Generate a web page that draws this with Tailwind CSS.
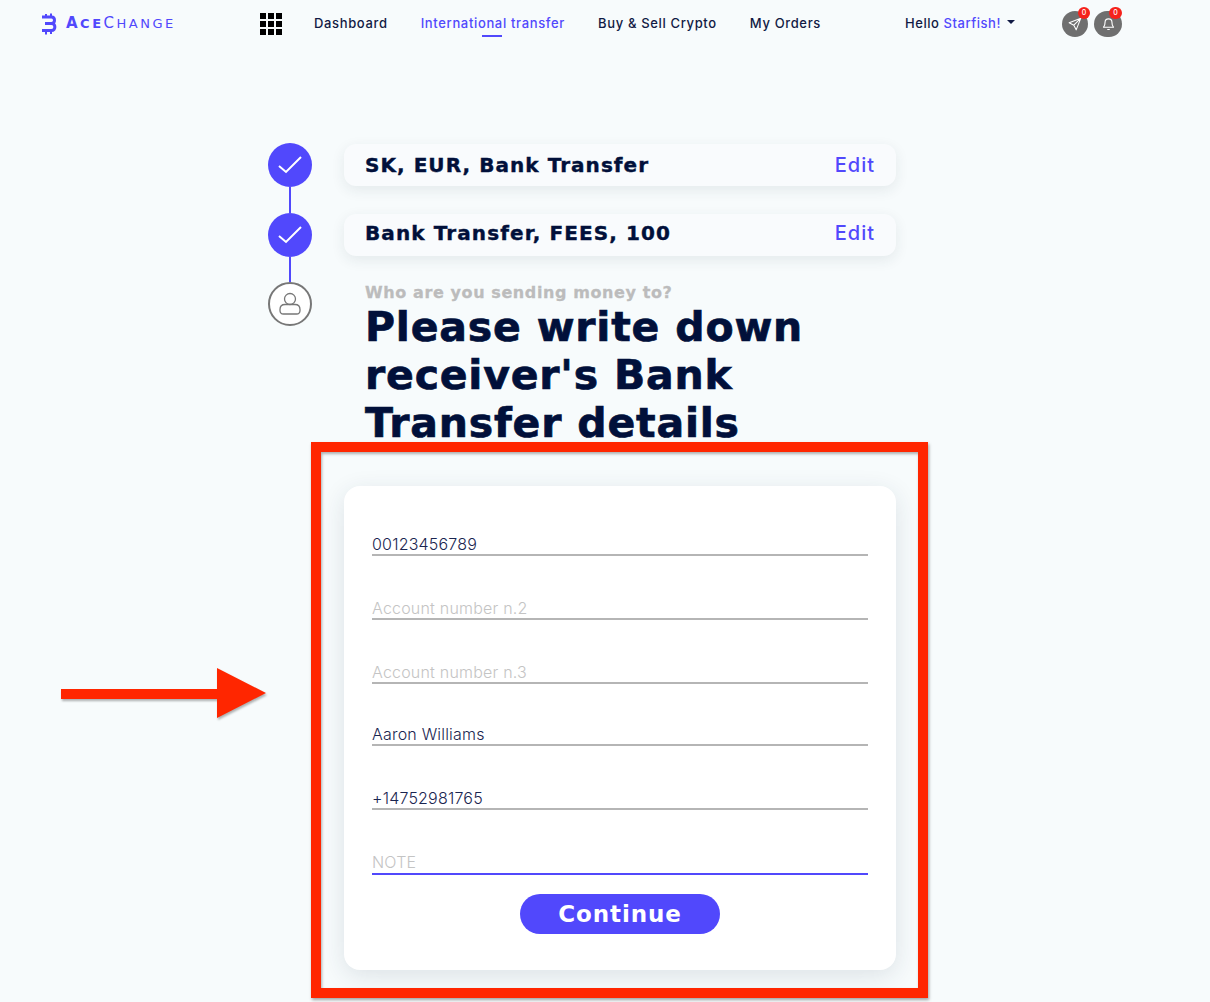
<!DOCTYPE html>
<html lang="en">
<head>
    <meta charset="UTF-8">
    <meta name="viewport" content="width=device-width, initial-scale=1.0">
    <title>AceChange - International transfer</title>
    <script src="https://cdn.jsdelivr.net/npm/@tailwindcss/browser@4"></script>
</head>
<body class="relative h-[1002px] overflow-hidden bg-[#f7fbfc] font-['Inter',sans-serif]">

    <!-- Top nav -->
    <header class="flex h-[47px] items-center text-[13px] font-medium tracking-[0.65px] text-[#111a44]">
        <div class="ml-[41px] flex w-[219px] items-center">
            <svg class="h-[22px] w-[16px]" viewBox="0 0 16 22" fill="none" stroke="#5148fc" stroke-width="3">
                <path d="M1 4H10.500C14.500 4 14.500 10.500 10.500 10.500H4M10.500 10.500C15 10.500 15 17.500 10.500 17.500H1"/>
                <path d="M5 1V4M10 .5V4M5 17.500V21.500M10 17.500V21" stroke-width="2"/>
            </svg>
            <span class="ml-[9px] whitespace-nowrap font-['DejaVu_Sans',sans-serif] text-[13px] tracking-[2.500px] text-[#5148fc]"><b><span class="text-[15px]">A</span>CE</b><span class="font-normal"><span class="text-[15px]">C</span>HANGE</span></span>
        </div>
        <div class="grid h-[22px] w-[22px] grid-cols-3 gap-[2px]">
            <i class="bg-black"></i><i class="bg-black"></i><i class="bg-black"></i>
            <i class="bg-black"></i><i class="bg-black"></i><i class="bg-black"></i>
            <i class="bg-black"></i><i class="bg-black"></i><i class="bg-black"></i>
        </div>
        <nav class="ml-[32px] flex w-[591px] gap-[33px]">
            <a>Dashboard</a>
            <a class="relative text-[#5148fc]">International transfer
                <span class="absolute bottom-[-4px] left-[61px] h-[2px] w-[20px] bg-[#5148fc]"></span>
            </a>
            <a>Buy &amp; Sell Crypto</a>
            <a>My Orders</a>
        </nav>
        <div class="flex w-[157px] items-center tracking-[0.55px]">
            Hello&nbsp;<span class="text-[#5148fc]">Starfish!</span>
            <span class="ml-[6px] mb-[3px] h-0 w-0 border-x-[4px] border-t-[4px] border-x-transparent border-t-[#111a44]"></span>
        </div>
        <div class="flex gap-[6px]">
            <div class="relative flex h-[26px] w-[26px] items-center justify-center rounded-full bg-[#6f6f6f]">
                <svg class="h-[14px] w-[14px]" viewBox="0 0 24 24" fill="none" stroke="#fff" stroke-width="1.800" stroke-linejoin="round">
                    <path d="M22 2L2 10l8 4 4 8zM22 2L10 14"/>
                </svg>
                <span class="absolute right-[-2px] top-[-4px] flex h-[12px] w-[12px] items-center justify-center rounded-full bg-[#f5221b] text-[7px] leading-none tracking-normal text-white">0</span>
            </div>
            <div class="relative flex h-[26px] w-[28px] items-center justify-center rounded-full bg-[#6f6f6f]">
                <svg class="h-[15px] w-[15px]" viewBox="0 0 24 24" fill="none" stroke="#fff" stroke-width="1.800" stroke-linejoin="round">
                    <path d="M4 18c2-2 2.500-4 2.500-8a5.500 5.500 0 0111 0c0 4 .5 6 2.500 8zM10 21.500h4"/>
                </svg>
                <span class="absolute right-[0px] top-[-4px] flex h-[12px] w-[13px] items-center justify-center rounded-full bg-[#f5221b] text-[7px] leading-none tracking-normal text-white">0</span>
            </div>
        </div>
    </header>

    <!-- Steps -->
    <main class="ml-[268px] mt-[96px] w-[628px] text-[#01103a]">
        <div class="flex gap-[32px]">
            <div class="flex w-[44px] flex-col items-center">
                <div class="flex h-[44px] w-[44px] items-center justify-center rounded-full bg-[#5148fc]">
                    <svg class="h-[26px] w-[26px]" viewBox="0 0 26 26" fill="none" stroke="#fff" stroke-width="2"><path d="M2 14l7 6L24 5"/></svg>
                </div>
                <div class="h-[26px] w-[2px] bg-[#5148fc]"></div>
            </div>
            <div class="mt-[1px] flex h-[42px] w-[552px] items-center justify-between rounded-[12px] bg-[#f9fbfd] px-[21px] shadow-[0_4px_14px_rgba(30,50,70,0.09)]">
                <span class="font-['DejaVu_Sans',sans-serif] text-[20px] font-bold tracking-[1.05px] [-webkit-text-stroke:0.4px_#01103a]">SK, EUR, Bank Transfer</span>
                <span class="text-[20px] font-medium tracking-[1px] text-[#5148fc]">Edit</span>
            </div>
        </div>
        <div class="flex gap-[32px]">
            <div class="flex w-[44px] flex-col items-center">
                <div class="flex h-[44px] w-[44px] items-center justify-center rounded-full bg-[#5148fc]">
                    <svg class="h-[26px] w-[26px]" viewBox="0 0 26 26" fill="none" stroke="#fff" stroke-width="2"><path d="M2 14l7 6L24 5"/></svg>
                </div>
                <div class="h-[25px] w-[2px] bg-[#5148fc]"></div>
            </div>
            <div class="mt-[1px] flex h-[42px] w-[552px] items-center justify-between rounded-[12px] bg-[#f9fbfd] px-[21px] pb-[4px] shadow-[0_4px_14px_rgba(30,50,70,0.09)]">
                <span class="font-['DejaVu_Sans',sans-serif] text-[20px] font-bold tracking-[1.1px] [-webkit-text-stroke:0.4px_#01103a]">Bank Transfer, FEES, 100</span>
                <span class="text-[20px] font-medium tracking-[1px] text-[#5148fc]">Edit</span>
            </div>
        </div>
        <div class="flex gap-[32px]">
            <div class="flex h-[44px] w-[44px] shrink-0 items-center justify-center rounded-full border-2 border-[#777] bg-white">
                <svg class="h-[26px] w-[26px]" viewBox="0 0 26 26" fill="none" stroke="#777" stroke-width="1.300">
                    <circle cx="13" cy="8" r="5.500"/>
                    <path d="M8 13.500h10c3 0 5 2 5 5v1c0 2-1.500 3.500-3.500 3.500h-13C4.500 23 3 21.500 3 19.500v-1c0-3 2-5 5-5z"/>
                </svg>
            </div>
            <div class="ml-[21px] w-[450px]">
                <p class="mt-[1px] font-['DejaVu_Sans',sans-serif] text-[16px] font-bold leading-[20px] tracking-[0.6px] text-[#bcbcbc] [-webkit-text-stroke:0.3px_#bcbcbc]">Who are you sending money to?</p>
                <h1 class="font-['DejaVu_Sans',sans-serif] text-[41px] font-bold leading-[48px] tracking-[0.8px] [-webkit-text-stroke:0.7px_#01103a]">Please write down receiver's Bank Transfer details</h1>
            </div>
        </div>

        <!-- Receiver form -->
        <form class="ml-[76px] mt-[39px] flex h-[484px] w-[552px] flex-col rounded-[16px] bg-white px-[28px] pt-[45px] shadow-[0_6px_24px_rgba(30,50,70,0.12)] text-[16px] font-light tracking-[0.2px]">
            <div class="h-[25px] border-b-2 border-[#b5b5b5] leading-[26px] text-[#1a2550]">00123456789</div>
            <div class="mt-[39px] h-[25px] border-b-2 border-[#b5b5b5] leading-[26px] text-[#c4c4c4]">Account number n.2</div>
            <div class="mt-[39px] h-[25px] border-b-2 border-[#b5b5b5] leading-[26px] text-[#c4c4c4]">Account number n.3</div>
            <div class="mt-[37px] h-[25px] border-b-2 border-[#b5b5b5] leading-[26px] text-[#1a2550]">Aaron Williams</div>
            <div class="mt-[39px] h-[25px] border-b-2 border-[#b5b5b5] leading-[26px] text-[#1a2550]">+14752981765</div>
            <div class="mt-[39px] h-[26px] border-b-2 border-[#5148fc] leading-[26px] text-[#c4c4c4]">NOTE</div>
            <button type="button" class="mx-auto mt-[19px] h-[40px] w-[200px] rounded-full bg-[#5148fc] font-['DejaVu_Sans',sans-serif] text-[23px] font-bold tracking-[0.9px] text-white">Continue</button>
        </form>
    </main>

    <!-- Annotation: red box and arrow drawn on top of the page -->
    <div class="absolute left-[311px] top-[442px] h-[556px] w-[617px] border-[10px] border-[#ff2600] shadow-[1px_2px_3px_rgba(0,0,0,0.35),inset_1px_2px_3px_rgba(0,0,0,0.3)]"></div>
    <svg class="absolute left-[60px] top-[667px] h-[52px] w-[208px] drop-shadow-[1px_2px_1px_rgba(0,0,0,0.3)]" viewBox="0 0 208 52">
        <path d="M1 22H157V1L206 26 157 51V32H1z" fill="#ff2600"/>
    </svg>
</body>
</html>
